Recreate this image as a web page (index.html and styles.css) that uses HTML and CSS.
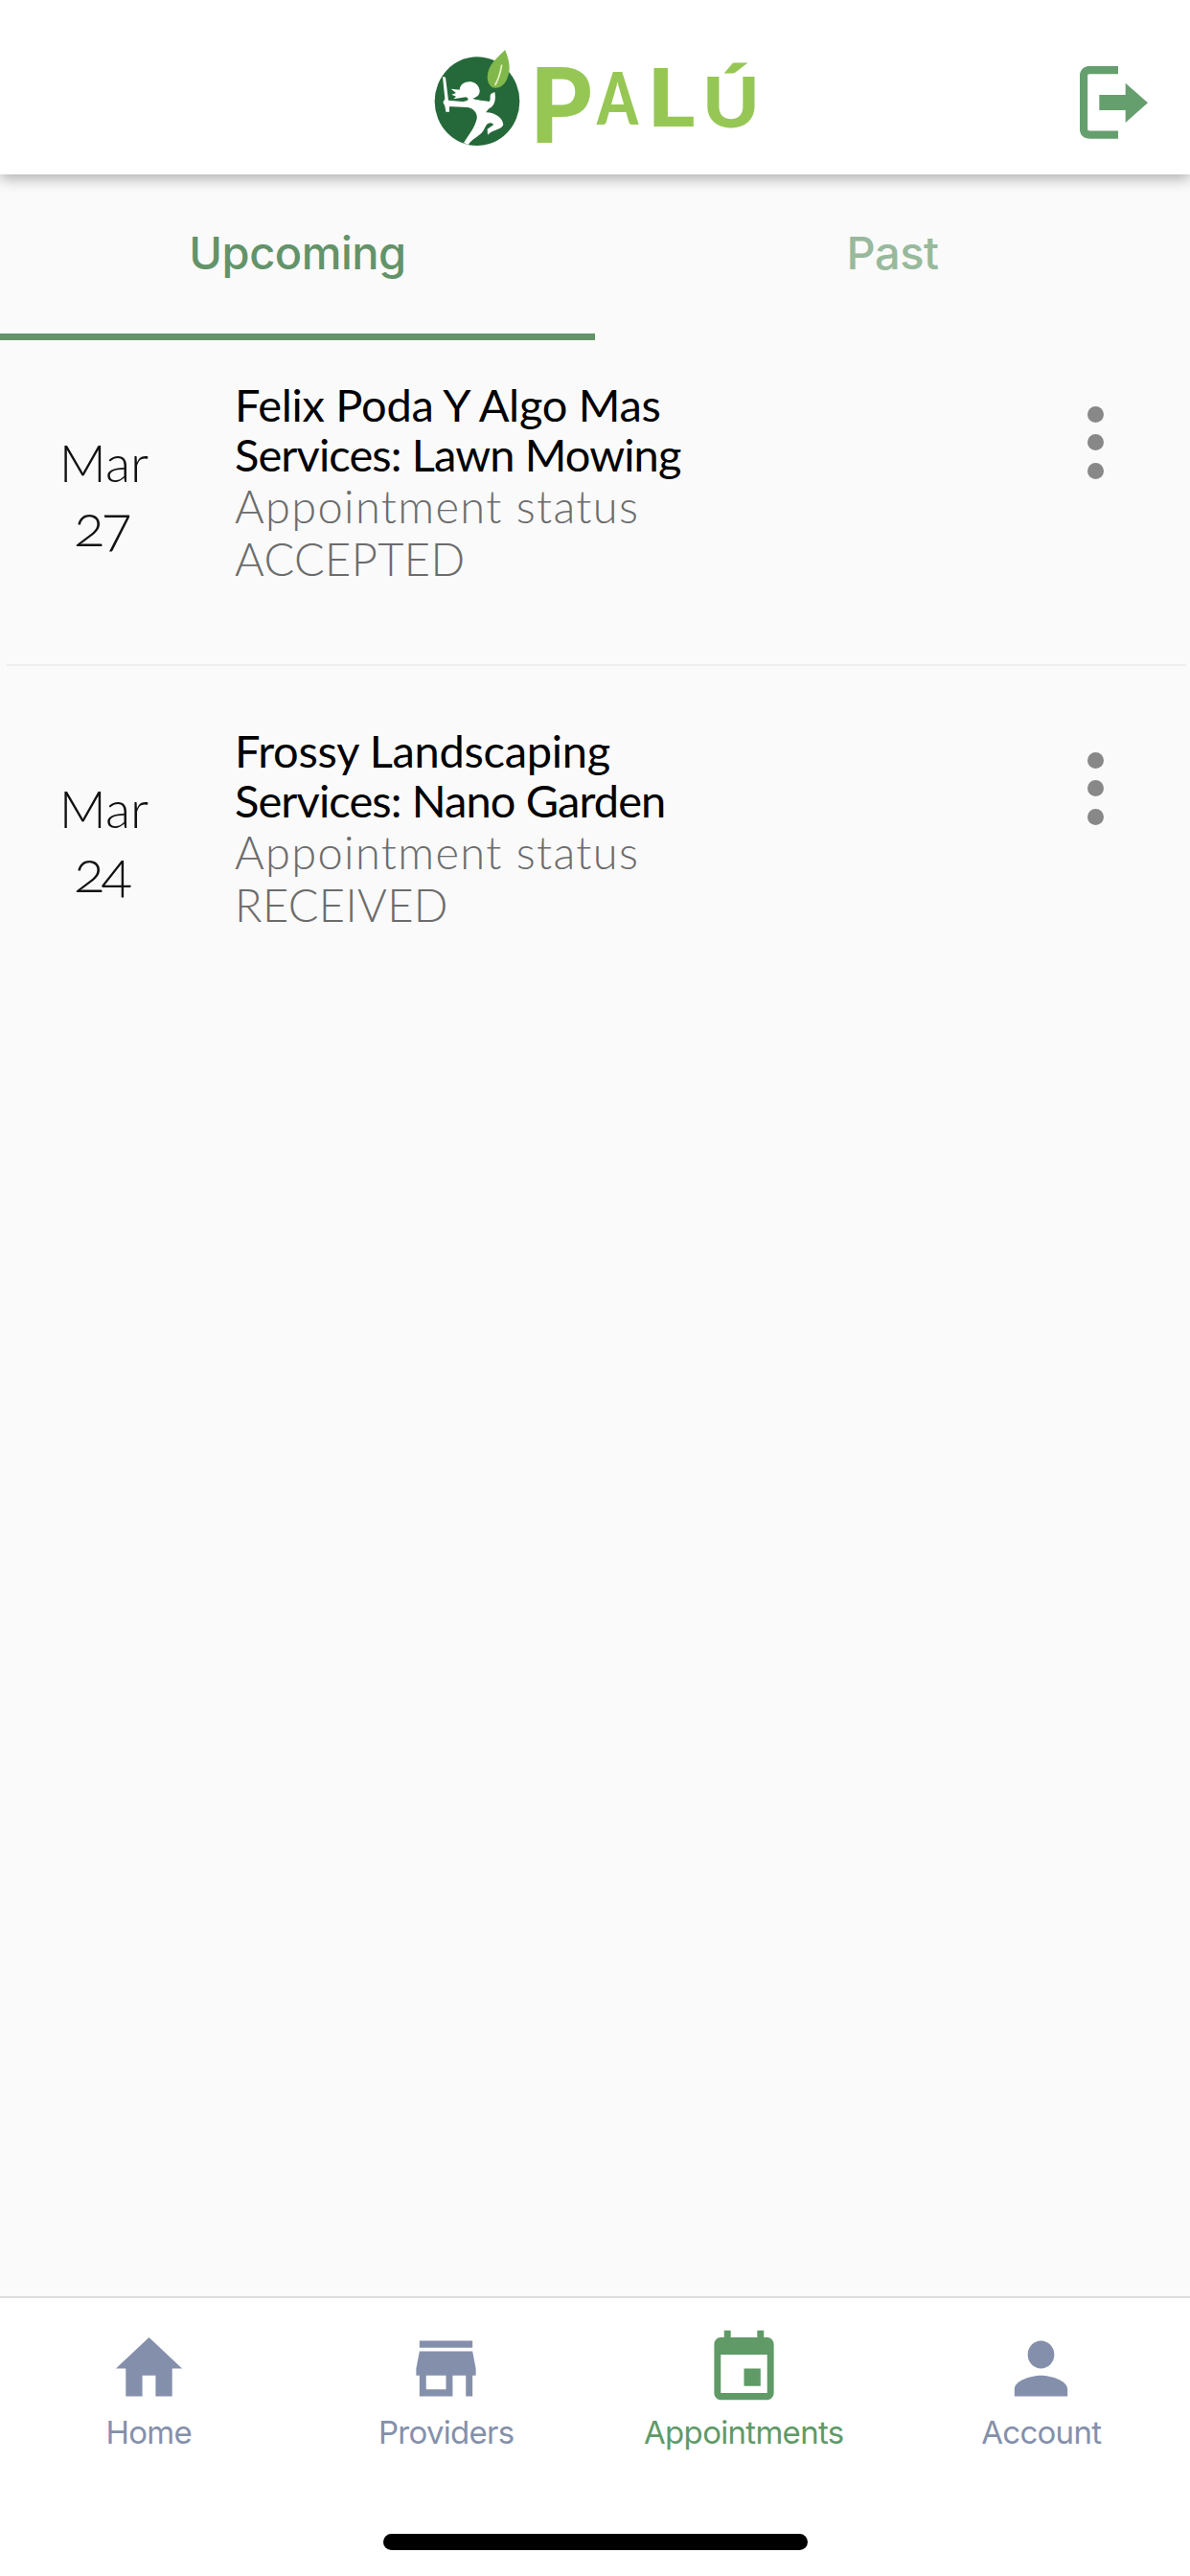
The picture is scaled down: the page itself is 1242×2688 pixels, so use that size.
FILE: index.html
```html
<!DOCTYPE html>
<html lang="en">
<head>
  <meta charset="UTF-8" />
  <meta name="viewport" content="width=device-width, initial-scale=1.0" />
  <title>Appointments</title>
  <link rel="stylesheet" href="styles.css">
</head>
<body>
  <header class="header">
    <svg class="logo" viewBox="0 0 1080 360">
      <ellipse cx="174" cy="197" rx="133" ry="139" fill="#25693a" />
      <path d="M66 120 L75 122 L84 194 L127 198 L126 209 L87 213 L87 230 L76 230 L73 212 L67 200 L73 190 Z" fill="#fff" />
      <path d="M119 161 C122 128 174 127 181 159 C185 174 176 184 160 188 C174 195 195 193 211 198 C219 192 211 180 218 173 L229 168 C234 194 227 213 211 220 L201 232 C228 232 253 247 256 270 C251 287 224 284 207 302 L206 284 L226 270 C213 258 204 268 197 282 C187 306 163 309 146 333 L132 327 C151 297 165 282 173 252 C176 235 163 219 144 216 L80 213 L80 198 L130 198 C148 197 150 189 139 184 L124 186 L100 190 L108 182 L94 176 L108 171 L92 158 Z" fill="#fff" />
      <path d="M261 36 C274 64 280 95 270 121 C262 146 244 160 221 154 C201 139 203 108 216 86 C229 65 247 52 261 36 Z" fill="#81b84b" />
      <path d="M251 83 C247 108 240 129 230 147" fill="none" stroke="#e8f3c6" stroke-width="5" />
      <g class="logo-text">
        <text class="logo-p" transform="translate(338 328) scale(0.96 1)">P</text>
        <text class="logo-a" transform="translate(549 269) scale(0.8 1)">A</text>
        <text class="logo-l" transform="translate(706 276) scale(1.15 1)">L</text>
        <text class="logo-u" transform="translate(879 278) scale(1.12 1)">Ú</text>
      </g>
    </svg>
    <svg class="logout" viewBox="0 0 213 228">
      <path d="M120 12 H32 Q12 12 12 32 V196 Q12 215 32 215 H120" fill="none" stroke="#669f6e" stroke-width="25" />
      <path d="M61 90 H143 V53 L213 115 L143 177 V138 H61 Z" fill="#669f6e" />
    </svg>
  </header>

  <div class="tabs">
    <div class="tab active">Upcoming</div>
    <div class="tab">Past</div>
  </div>

  <main class="list">
    <div class="item">
      <div class="date">
        <div>Mar</div>
        <div class="day">27</div>
      </div>
      <div class="info">
        <div class="name">Felix Poda Y Algo Mas</div>
        <div class="name services">Services: Lawn Mowing</div>
        <div class="status">Appointment status</div>
        <div class="status value">ACCEPTED</div>
      </div>
      <div class="more"><i></i><i></i><i></i></div>
    </div>
    <div class="item">
      <div class="date">
        <div>Mar</div>
        <div class="day">24</div>
      </div>
      <div class="info">
        <div class="name">Frossy Landscaping</div>
        <div class="name services">Services: Nano Garden</div>
        <div class="status">Appointment status</div>
        <div class="status value">RECEIVED</div>
      </div>
      <div class="more"><i></i><i></i><i></i></div>
    </div>
  </main>

  <footer class="footer">
    <nav class="nav">
      <div class="nav-item">
        <svg class="icon" viewBox="0 0 24 24" preserveAspectRatio="none"><path d="M10 20v-6h4v6h5v-8h3L12 3 2 12h3v8z" /></svg>
        <span>Home</span>
      </div>
      <div class="nav-item">
        <svg class="icon" viewBox="0 0 24 24" preserveAspectRatio="none"><path d="M20 4H4v2h16V4zm1 10v-2l-1-5H4l-1 5v2h1v6h10v-6h4v6h2v-6h1zm-9 4H6v-4h6v4z" /></svg>
        <span>Providers</span>
      </div>
      <div class="nav-item active">
        <svg class="icon" viewBox="0 0 24 24" preserveAspectRatio="none"><path d="M17 12h-5v5h5v-5zM16 1v2H8V1H6v2H5c-1.11 0-1.99.9-1.99 2L3 19c0 1.1.89 2 2 2h14c1.1 0 2-.9 2-2V5c0-1.1-.9-2-2-2h-1V1h-2zm3 18H5V8h14v11z" /></svg>
        <span>Appointments</span>
      </div>
      <div class="nav-item">
        <svg class="icon" viewBox="0 0 24 24" preserveAspectRatio="none"><path d="M12 12c2.21 0 4-1.79 4-4s-1.79-4-4-4-4 1.79-4 4 1.79 4 4 4zm0 2c-2.67 0-8 1.34-8 4v2h16v-2c0-2.66-5.33-4-8-4z" /></svg>
        <span>Account</span>
      </div>
    </nav>
    <div class="home-bar"></div>
  </footer>
</body>
</html>
```
FILE: styles.css
```css
* { box-sizing: border-box; }
body {
  margin: 0;
  height: 2688px;
  display: flex;
  flex-direction: column;
  background: #fafafa;
  font-family: Inter, Roboto, sans-serif;
}
.header {
  display: flex;
  justify-content: space-between;
  height: 182px;
  padding: 40px 44px 0 440px;
  background: #fff;
  box-shadow: 0 4px 14px rgba(0, 0, 0, 0.32);
}
.logo { width: 360px; height: 120px; overflow: visible; }
.logo-text {
  font-family: Lato, sans-serif;
  font-weight: 900;
  fill: #96c755;
}
.logo-p { font-size: 325px; }
.logo-a { font-size: 230px; }
.logo-l { font-size: 250px; }
.logo-u { font-size: 215px; }
.logout { width: 71px; height: 76px; margin-top: 29px; }

.tabs { display: flex; height: 173px; }
.tab {
  flex: 1;
  padding-top: 52px;
  border-bottom: 7px solid transparent;
  text-align: center;
  font-size: 47px;
  line-height: 60px;
  font-weight: 500;
  letter-spacing: -0.5px;
  color: #98b99b;
}
.tab.active { color: #639369; border-color: #639369; }

.list { flex: 1; }
.item {
  display: flex;
  height: 361px;
  padding-top: 62px;
}
.item:first-child {
  height: 340px;
  margin: 0 4px 0 7px;
  padding-top: 41px;
  border-bottom: 2px solid #eee;
}
.date {
  width: 217px;
  padding-top: 53px;
  text-align: center;
  font: 300 54px/68px Lato, sans-serif;
  color: #111;
}
.item:first-child .date { margin-left: -7px; }
.day {
  padding-right: 6px;
  font-size: 60px;
  line-height: 60px;
  letter-spacing: -4px;
  font-feature-settings: "onum";
}
.info { flex: 1; padding-left: 28px; font-family: Lato, sans-serif; font-size: 47px; }
.name { line-height: 52px; letter-spacing: -0.3px; color: #000; }
.services { letter-spacing: -0.9px; }
.status { line-height: 55px; font-weight: 300; letter-spacing: 1.35px; color: #6c6c6c; }
.status:nth-child(3) { padding-top: 1px; }
.value { letter-spacing: 0.35px; }
.more {
  display: flex;
  flex-direction: column;
  gap: 12.5px;
  width: 108px;
  padding-top: 27.5px;
}
.item:first-child .more { margin-right: -4px; }
.more i { width: 17px; height: 17px; margin-left: 0.5px; border-radius: 50%; background: #888; }

.footer { height: 292px; background: #fff; border-top: 2px solid #ddd; }
.nav { display: flex; height: 246px; padding-top: 30px; }
.nav-item {
  flex: 1;
  display: flex;
  flex-direction: column;
  align-items: center;
  color: #8490ab;
  font-size: 33px;
  line-height: 40px;
  letter-spacing: -0.7px;
}
.nav-item.active { color: #5f9a67; }
.icon { width: 83px; height: 87px; margin-bottom: 3px; fill: currentColor; }
.home-bar { width: 443px; height: 17px; margin: 0 auto; border-radius: 9px; background: #000; }
```
